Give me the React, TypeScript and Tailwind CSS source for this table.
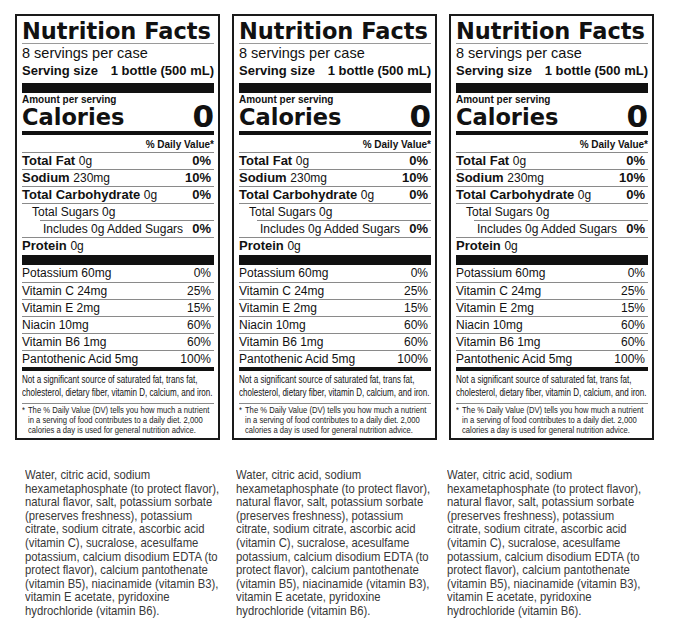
import React from "react";

const LINE = "border-b border-[#8a8a8a]";

function TopRow({
  name,
  amt,
  pct,
}: {
  name: string;
  amt: string;
  pct?: string;
}) {
  return (
    <div className={`flex justify-between h-[17px] ${LINE} text-[13px] leading-[16px] whitespace-nowrap`}>
      <span>
        <span className="font-bold">{name}</span> <span className="text-[12px]">{amt}</span>
      </span>
      {pct ? <span className="font-bold pr-[3px]">{pct}</span> : null}
    </div>
  );
}

function VitRow({ name, pct }: { name: string; pct: string }) {
  return (
    <div className={`flex justify-between h-[17px] ${LINE} text-[12px] leading-[16px] whitespace-nowrap`}>
      <span>{name}</span>
      <span className="pr-[3px]">{pct}</span>
    </div>
  );
}

function Label() {
  return (
    <div className="w-[205px] h-[426px] border-2 border-[#1a1a1a] pl-[5px] pr-[4px] text-[#111] font-['Liberation_Sans',Arial,sans-serif] overflow-hidden">
      <div className="h-[27px] pt-[4px] text-[22.5px] leading-[23px] font-bold font-['DejaVu_Sans',sans-serif] whitespace-nowrap">
        Nutrition Facts
      </div>
      <div className="h-px bg-[#9a9a9a]" />
      <div className="mt-[1px] text-[14.5px] leading-[16px] whitespace-nowrap">8 servings per case</div>
      <div className="flex justify-between text-[13px] font-bold leading-[20px] whitespace-nowrap">
        <span>Serving size</span>
        <span>1 bottle (500 mL)</span>
      </div>
      <div className="mt-[2px] h-[10px] bg-[#111]" />
      <div className="h-[14px] text-[10px] font-bold leading-[13px] whitespace-nowrap">Amount per serving</div>
      <div className="flex justify-between items-start h-[24px] font-['DejaVu_Sans',sans-serif] font-bold">
        <span className="text-[22.5px] leading-[20px]">Calories</span>
        <span className="text-[31px] leading-[19px]">0</span>
      </div>
      <div className="h-[4px] bg-[#111]" />
      <div className={`pt-[3px] text-[10px] font-bold leading-[14px] text-right ${LINE}`}>% Daily Value*</div>
      <TopRow name="Total Fat" amt="0g" pct="0%" />
      <TopRow name="Sodium" amt="230mg" pct="10%" />
      <TopRow name="Total Carbohydrate" amt="0g" pct="0%" />
      <div className="h-[16px] pl-[10px] text-[12px] leading-[16px] whitespace-nowrap">Total Sugars 0g</div>
      <div className="ml-[18px] h-px bg-[#8a8a8a]" />
      <div className={`flex justify-between h-[17px] ${LINE} pl-[21px] text-[12px] leading-[16px] whitespace-nowrap`}>
        <span>Includes 0g Added Sugars</span>
        <span className="text-[13px] font-bold pr-[3px]">0%</span>
      </div>
      <div className="h-[17px] text-[13px] leading-[16px] whitespace-nowrap">
        <span className="font-bold">Protein</span> <span className="text-[12px]">0g</span>
      </div>
      <div className="h-[10px] bg-[#111]" />
      <div className={`flex justify-between h-[18px] ${LINE} text-[12px] leading-[17px] whitespace-nowrap`}>
        <span>Potassium 60mg</span>
        <span className="pr-[3px]">0%</span>
      </div>
      <VitRow name="Vitamin C 24mg" pct="25%" />
      <VitRow name="Vitamin E 2mg" pct="15%" />
      <VitRow name="Niacin 10mg" pct="60%" />
      <VitRow name="Vitamin B6 1mg" pct="60%" />
      <div className="flex justify-between h-[16px] text-[12px] leading-[16px] whitespace-nowrap">
        <span>Pantothenic Acid 5mg</span>
        <span className="pr-[3px]">100%</span>
      </div>
      <div className="h-[4px] bg-[#111]" />
      <div className={`pt-[3px] pb-[4px] ${LINE}`}>
        <div className="origin-left scale-x-[0.79] text-[10.2px] leading-[12.5px] whitespace-nowrap">
          <div>Not a significant source of saturated fat, trans fat,</div>
          <div>cholesterol, dietary fiber, vitamin D, calcium, and iron.</div>
        </div>
      </div>
      <div className="pt-[1px] origin-left scale-x-[0.85] flex text-[9px] leading-[10px] whitespace-nowrap text-[#222]">
        <span className="w-[7px] shrink-0">*</span>
        <div>
          <div>The % Daily Value (DV) tells you how much a nutrient</div>
          <div>in a serving of food contributes to a daily diet. 2,000</div>
          <div>calories a day is used for general nutrition advice.</div>
        </div>
      </div>
    </div>
  );
}

const INGREDIENTS = [
  "Water, citric acid, sodium",
  "hexametaphosphate (to protect flavor),",
  "natural flavor, salt, potassium sorbate",
  "(preserves freshness), potassium",
  "citrate, sodium citrate, ascorbic acid",
  "(vitamin C), sucralose, acesulfame",
  "potassium, calcium disodium EDTA (to",
  "protect flavor), calcium pantothenate",
  "(vitamin B5), niacinamide (vitamin B3),",
  "vitamin E acetate, pyridoxine",
  "hydrochloride (vitamin B6).",
];

function Ingredients() {
  return (
    <div className="w-[211px]">
      <div className="origin-left scale-x-[0.85] text-[13.3px] leading-[13.6px] whitespace-nowrap text-[#383838] font-['Liberation_Sans',Arial,sans-serif]">
        {INGREDIENTS.map((l) => (
          <div key={l}>{l}</div>
        ))}
      </div>
    </div>
  );
}

export default function App() {
  return (
    <div className="w-[679px] h-[639px] bg-white overflow-hidden pt-[14px]">
      <div className="flex pl-[15px] gap-[12px]">
        <Label />
        <Label />
        <Label />
      </div>
      <div className="flex mt-[28px] pl-[25px]">
        <Ingredients />
        <Ingredients />
        <Ingredients />
      </div>
    </div>
  );
}
